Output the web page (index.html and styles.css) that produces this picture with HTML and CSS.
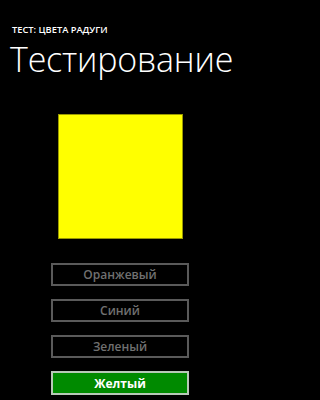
FILE: index.html
```html
<!DOCTYPE html>
<html>
<head>
<meta charset="utf-8">
<link rel="stylesheet" href="styles.css">
</head>
<body>
<div class="page">
  <div class="app-title">ТЕСТ: ЦВЕТА РАДУГИ</div>
  <div class="page-title">Тестирование</div>
  <div class="swatch"></div>
  <div class="answers">
    <div class="btn">Оранжевый</div>
    <div class="btn">Синий</div>
    <div class="btn">Зеленый</div>
    <div class="btn correct">Желтый</div>
  </div>
</div>
</body>
</html>
```
FILE: styles.css
```css
html, body {
  margin: 0;
  padding: 0;
  background: #000;
}
.page {
  width: 240px;
  height: 400px;
  overflow: hidden;
  font-family: "Open Sans", "Noto Sans", sans-serif;
  color: #fff;
  display: flex;
  flex-direction: column;
}
.app-title {
  margin: 24px 0 0 12px;
  font-size: 9.3px;
  font-weight: 600;
  line-height: 12px;
  white-space: nowrap;
}
.page-title {
  margin: 5px 0 0 10px;
  font-size: 34px;
  font-weight: 300;
  line-height: 36px;
  letter-spacing: -0.2px;
  white-space: nowrap;
}
.swatch {
  margin: 37px 0 0 58px;
  width: 123px;
  height: 123px;
  background: #ffff00;
  border: 1px solid #9a9a00;
}
.answers {
  margin: 24px 0 0 51px;
  display: flex;
  flex-direction: column;
  gap: 13px;
}
.btn {
  box-sizing: border-box;
  width: 138px;
  height: 23px;
  border: 2px solid #5a5a5a;
  color: #707070;
  font-size: 12px;
  font-weight: 600;
  display: flex;
  align-items: center;
  justify-content: center;
}
.btn.correct {
  height: 24px;
  background: #008a00;
  border-color: #b8c8b8;
  color: #fff;
  font-weight: 700;
}
```
